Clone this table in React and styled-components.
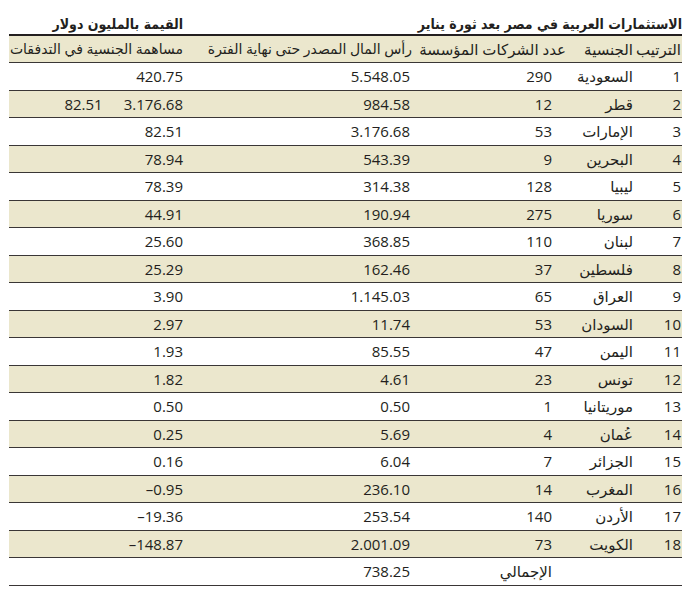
import React from "react";
import styled, { createGlobalStyle } from "styled-components";

const GlobalStyle = createGlobalStyle`
  html, body {
    margin: 0;
    padding: 0;
    background: #ffffff;
  }
  body {
    font-family: "Open Sans", "DejaVu Sans", sans-serif;
    color: #231f20;
  }
`;

const rows = [
  [1, "السعودية", "290", "5.548.05", "420.75"],
  [2, "قطر", "12", "984.58", "3.176.68", "82.51"],
  [3, "الإمارات", "53", "3.176.68", "82.51"],
  [4, "البحرين", "9", "543.39", "78.94"],
  [5, "ليبيا", "128", "314.38", "78.39"],
  [6, "سوريا", "275", "190.94", "44.91"],
  [7, "لبنان", "110", "368.85", "25.60"],
  [8, "فلسطين", "37", "162.46", "25.29"],
  [9, "العراق", "65", "1.145.03", "3.90"],
  [10, "السودان", "53", "11.74", "2.97"],
  [11, "اليمن", "47", "85.55", "1.93"],
  [12, "تونس", "23", "4.61", "1.82"],
  [13, "موريتانيا", "1", "0.50", "0.50"],
  [14, "عُمان", "4", "5.69", "0.25"],
  [15, "الجزائر", "7", "6.04", "0.16"],
  [16, "المغرب", "14", "236.10", "–0.95"],
  [17, "الأردن", "140", "253.54", "–19.36"],
  [18, "الكويت", "73", "2.001.09", "–148.87"],
];

const Page = styled.div`
  direction: rtl;
  width: 673px;
  padding: 7px 7px 0 9px;
`;

const TitleBar = styled.div`
  display: flex;
  justify-content: space-between;
  align-items: flex-end;
  height: 27px;
  font-family: "DejaVu Sans Condensed", "DejaVu Sans", sans-serif;
  font-size: 14px;
  font-weight: 700;
  line-height: 20px;
`;

const Unit = styled.div`
  width: 181px;
  box-sizing: border-box;
  padding-right: 7px;
  text-align: right;
`;

const Table = styled.table`
  width: 673px;
  border-collapse: collapse;
  table-layout: fixed;
  border-top: 2px solid #231f20;
  font-size: 15px;
`;

const Row = styled.tr`
  background: ${(p) => (p.$shaded ? "#ebe7cd" : "#ffffff")};
  border-bottom: 1px solid #3a3636;
  height: 27.5px;
`;

const Cell = styled.td`
  padding: 0 ${(p) => p.$pad ?? 6}px 0 0;
  text-align: right;
  white-space: nowrap;
  line-height: 20px;
  vertical-align: middle;
`;

const HeadCell = styled.th`
  padding: 0 ${(p) => p.$pad ?? 6}px 0 0;
  text-align: right;
  font-size: ${(p) => p.$size ?? 15}px;
  font-weight: 400;
  white-space: nowrap;
  line-height: 20px;
`;

const Num = styled.span`
  direction: ltr;
  unicode-bidi: isolate;
`;

const Pair = styled.span`
  display: inline-flex;
  gap: 21px;
  direction: rtl;
`;

export default function App() {
  return (
    <>
      <GlobalStyle />
      <Page>
        <TitleBar>
          <span>الاستثمارات العربية في مصر بعد ثورة يناير</span>
          <Unit>القيمة بالمليون دولار</Unit>
        </TitleBar>
        <Table>
          <colgroup>
            <col style={{ width: 42 }} />
            <col style={{ width: 70 }} />
            <col style={{ width: 155 }} />
            <col style={{ width: 225 }} />
            <col style={{ width: 181 }} />
          </colgroup>
          <thead>
            <Row $shaded>
              <HeadCell $pad={1}>الترتيب</HeadCell>
              <HeadCell $pad={7}>الجنسية</HeadCell>
              <HeadCell $pad={4}>عدد الشركات المؤسسة</HeadCell>
              <HeadCell $pad={3} $size={14}>
                رأس المال المصدر حتى نهاية الفترة
              </HeadCell>
              <HeadCell $pad={7} $size={14}>
                مساهمة الجنسية في التدفقات
              </HeadCell>
            </Row>
          </thead>
          <tbody>
            {rows.map(([rank, name, count, capital, share, extra]) => (
              <Row key={rank} $shaded={rank % 2 === 0}>
                <Cell $pad={1}>
                  <Num>{rank}</Num>
                </Cell>
                <Cell $pad={7}>{name}</Cell>
                <Cell $pad={18}>
                  <Num>{count}</Num>
                </Cell>
                <Cell $pad={5}>
                  <Num>{capital}</Num>
                </Cell>
                <Cell $pad={7}>
                  {extra ? (
                    <Pair>
                      <Num>{share}</Num>
                      <Num>{extra}</Num>
                    </Pair>
                  ) : (
                    <Num>{share}</Num>
                  )}
                </Cell>
              </Row>
            ))}
            <Row>
              <Cell />
              <Cell />
              <Cell $pad={18}>الإجمالي</Cell>
              <Cell $pad={5}>
                <Num>738.25</Num>
              </Cell>
              <Cell />
            </Row>
          </tbody>
        </Table>
      </Page>
    </>
  );
}
